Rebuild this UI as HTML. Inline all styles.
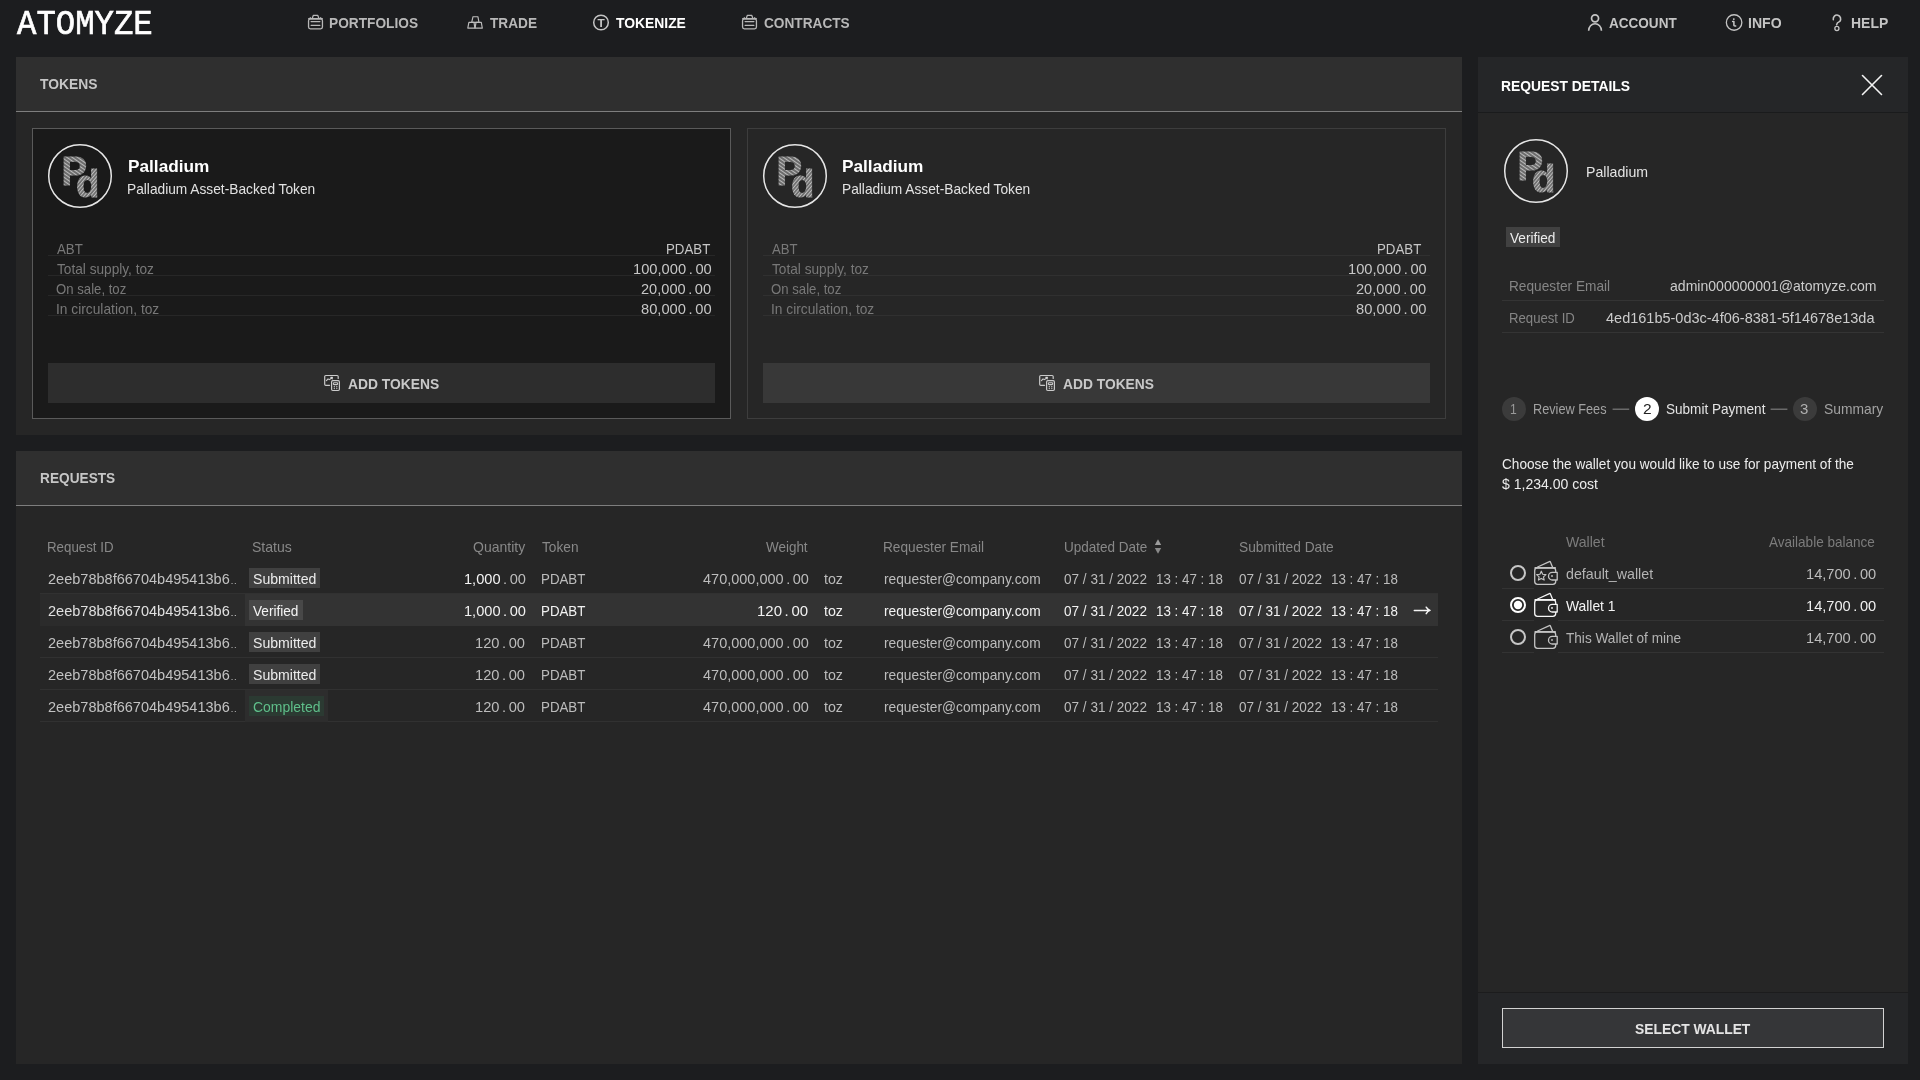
<!DOCTYPE html>
<html lang="en"><head><meta charset="utf-8"><title>Atomyze - Tokenize</title>
<style>
html,body{margin:0;padding:0;background:#1c1d1f;}
body{width:1920px;height:1080px;overflow:hidden;font-family:"Liberation Sans",sans-serif;}
#app{position:relative;width:1920px;height:1080px;overflow:hidden;background:#1c1d1f;}
.b{position:absolute;box-sizing:border-box;}
.t{position:absolute;line-height:0;white-space:pre;transform-origin:0 50%;font-family:"Liberation Sans",sans-serif;}
.t i{font-style:normal;margin:0 2.6px;}
.t b{font-weight:400;}
.t u{text-decoration:none;font-size:9.5px;letter-spacing:0.6px;margin-left:1px;}
svg{position:absolute;overflow:visible;will-change:transform;}
#txt{position:absolute;left:0;top:0;width:1920px;height:1080px;will-change:transform;}

</style></head>
<body>
<div id="app">
<div class="b " style="left:16px;top:57px;width:1446px;height:378px;background:#262626;"></div>
<div class="b " style="left:16px;top:57px;width:1446px;height:54px;background:#2f2f2f;"></div>
<div class="b " style="left:16px;top:111px;width:1446px;height:1px;background:#7e7e7e;"></div>
<div class="b " style="left:32px;top:128px;width:699px;height:291px;background:#1a1a1a;border:1px solid #5a5a5a;"></div>
<div class="b " style="left:747px;top:128px;width:699px;height:291px;background:#262626;border:1px solid #3d3d3d;"></div>
<div class="b " style="left:48px;top:255px;width:667px;height:1px;background:#272727;"></div>
<div class="b " style="left:48px;top:275px;width:667px;height:1px;background:#272727;"></div>
<div class="b " style="left:48px;top:295px;width:667px;height:1px;background:#272727;"></div>
<div class="b " style="left:48px;top:315px;width:667px;height:1px;background:#272727;"></div>
<div class="b " style="left:48px;top:363px;width:667px;height:40px;background:#2d2d2d;"></div>
<div class="b " style="left:763px;top:255px;width:667px;height:1px;background:#303030;"></div>
<div class="b " style="left:763px;top:275px;width:667px;height:1px;background:#303030;"></div>
<div class="b " style="left:763px;top:295px;width:667px;height:1px;background:#303030;"></div>
<div class="b " style="left:763px;top:315px;width:667px;height:1px;background:#303030;"></div>
<div class="b " style="left:763px;top:363px;width:667px;height:40px;background:#383838;"></div>
<div class="b " style="left:16px;top:451px;width:1446px;height:613px;background:#262626;"></div>
<div class="b " style="left:16px;top:451px;width:1446px;height:54px;background:#2f2f2f;"></div>
<div class="b " style="left:16px;top:505px;width:1446px;height:1px;background:#7e7e7e;"></div>
<div class="b " style="left:40px;top:593px;width:1398px;height:1px;background:#313131;"></div>
<div class="b " style="left:40px;top:625px;width:1398px;height:1px;background:#313131;"></div>
<div class="b " style="left:40px;top:657px;width:1398px;height:1px;background:#313131;"></div>
<div class="b " style="left:40px;top:689px;width:1398px;height:1px;background:#313131;"></div>
<div class="b " style="left:40px;top:721px;width:1398px;height:1px;background:#313131;"></div>
<div class="b " style="left:40px;top:594px;width:205px;height:32px;background:#2b2b2b;"></div>
<div class="b " style="left:245px;top:594px;width:1193px;height:32px;background:#333333;"></div>
<div class="b " style="left:245px;top:690px;width:83px;height:32px;background:#2d2d2d;"></div>
<div class="b " style="left:249px;top:568px;width:71px;height:20px;background:#404040;"></div>
<div class="b " style="left:249px;top:632px;width:71px;height:20px;background:#404040;"></div>
<div class="b " style="left:249px;top:664px;width:71px;height:20px;background:#404040;"></div>
<div class="b " style="left:249px;top:600px;width:54px;height:20px;background:#484848;"></div>
<div class="b " style="left:249px;top:696px;width:75px;height:20px;background:#2b3a32;"></div>
<div class="b " style="left:1478px;top:57px;width:430px;height:1007px;background:#262626;"></div>
<div class="b " style="left:1478px;top:57px;width:430px;height:55px;background:#252628;"></div>
<div class="b " style="left:1478px;top:112px;width:430px;height:1px;background:#1a1b1c;"></div>
<div class="b " style="left:1478px;top:993px;width:430px;height:71px;background:#252628;"></div>
<div class="b " style="left:1478px;top:992px;width:430px;height:1px;background:#1c1c1d;"></div>
<div class="b " style="left:1506px;top:227px;width:54px;height:20px;background:#414141;"></div>
<div class="b " style="left:1502px;top:300px;width:382px;height:1px;background:#343434;"></div>
<div class="b " style="left:1502px;top:332px;width:382px;height:1px;background:#343434;"></div>
<div class="b " style="left:1502px;top:397px;width:24px;height:24px;background:#3b3b3b;border-radius:50%;"></div>
<div class="b " style="left:1634.5px;top:397px;width:24px;height:24px;background:#ffffff;border-radius:50%;"></div>
<div class="b " style="left:1793px;top:397px;width:24px;height:24px;background:#3b3b3b;border-radius:50%;"></div>
<div class="b " style="left:1502px;top:588px;width:32px;height:1px;background:#333333;"></div>
<div class="b " style="left:1558px;top:588px;width:326px;height:1px;background:#333333;"></div>
<div class="b " style="left:1502px;top:620px;width:32px;height:1px;background:#333333;"></div>
<div class="b " style="left:1558px;top:620px;width:326px;height:1px;background:#333333;"></div>
<div class="b " style="left:1502px;top:652px;width:32px;height:1px;background:#333333;"></div>
<div class="b " style="left:1558px;top:652px;width:326px;height:1px;background:#333333;"></div>
<div class="b " style="left:1502px;top:1008px;width:382px;height:40px;background:#353638;border:1px solid #d2d2d2;"></div>
<svg width="1920" height="1080" viewBox="0 0 1920 1080" style="left:0;top:0"><defs><pattern id="hx" width="3" height="3" patternUnits="userSpaceOnUse" patternTransform="rotate(35)"><rect width="3" height="3" fill="#6c6c6c"/><rect width="3" height="1.0" fill="#bcbcbc"/></pattern><pattern id="hy" width="2.6" height="2.6" patternUnits="userSpaceOnUse" patternTransform="rotate(-50)"><rect width="2.6" height="2.6" fill="#707070"/><rect width="2.6" height="0.9" fill="#c0c0c0"/></pattern></defs><g stroke="#b8b8b8" stroke-width="1.3" fill="none" stroke-linecap="round" stroke-linejoin="round" ><rect x="308.54999999999995" y="18.9" width="13.9" height="9.9" rx="1.8"/><path d="M308.79999999999995 18.8 H322.2" stroke-width="1.5"/><path d="M312.29999999999995 18.3 L313.29999999999995 15.4 H317.79999999999995 L318.79999999999995 18.3"/><path d="M311.09999999999997 21.6 H319.9 M311.09999999999997 25.3 H319.9"/><path d="M309.79999999999995 18.2 l0.6 -0.9 M321.2 18.2 l-0.6 -0.9" stroke-width="1"/></g><g stroke="#b8b8b8" stroke-width="1.3" fill="none" stroke-linecap="round" stroke-linejoin="round" ><rect x="742.55" y="18.9" width="13.9" height="9.9" rx="1.8"/><path d="M742.8 18.8 H756.1999999999999" stroke-width="1.5"/><path d="M746.3 18.3 L747.3 15.4 H751.8 L752.8 18.3"/><path d="M745.1 21.6 H753.9 M745.1 25.3 H753.9"/><path d="M743.8 18.2 l0.6 -0.9 M755.1999999999999 18.2 l-0.6 -0.9" stroke-width="1"/></g><g stroke="#bcbcbc" stroke-width="1.15" fill="none" stroke-linecap="round" stroke-linejoin="round" ><path d="M473.0 16.7 H477.9 L479.0 22.3 H471.7 Z"/><path d="M468.9 22.3 H474.0 L474.9 28.1 H467.8 Z"/><path d="M476.0 22.3 H481.3 L482.3 28.1 H475.1 Z"/></g><g stroke="#c4c4c4" stroke-width="1.3" fill="none" stroke-linecap="round" stroke-linejoin="round" ><circle cx="601" cy="22.5" r="7.3" stroke-width="1.5"/></g><text x="601" y="27.2" text-anchor="middle" font-family="'Liberation Sans',sans-serif" font-weight="700" font-size="11.8" fill="#c8c8c8">T</text><g stroke="#c4c4c4" stroke-width="1.6" fill="none" stroke-linecap="round" stroke-linejoin="round" ><circle cx="1595.05" cy="18.35" r="3.5" stroke-width="1.75"/><path d="M1588.65 30.7 A6.4 7.0 0 0 1 1601.45 30.7" stroke-linecap="butt"/></g><g stroke="#c4c4c4" stroke-width="1.3" fill="none" stroke-linecap="round" stroke-linejoin="round" ><circle cx="1734.1" cy="22.5" r="7.75"/></g><g stroke="#c8c8c8" stroke-width="1.3" fill="none" stroke-linecap="round" stroke-linejoin="round" ><circle cx="1733.8" cy="19.1" r="0.95" fill="#c8c8c8" stroke="none"/><path d="M1732.6 21.6 H1733.9 V25.3 Q1734 25.9 1735.7 25.9" stroke-width="1.5"/></g><g stroke="#c4c4c4" stroke-width="1.3" fill="none" stroke-linecap="round" stroke-linejoin="round" ><path d="M1833.3 19.6 A3.7 3.9 0 1 1 1839.8 21.4 Q1836.7 22.9 1836.6 24.7" stroke-width="1.6"/><circle cx="1836.9" cy="28.5" r="2.05" stroke-width="1.3"/></g><g stroke="#6a6a6a" stroke-width="1.5" fill="none" stroke-linecap="round" stroke-linejoin="round" ><path d="M1612.6 409.3 H1629.2 M1770.6 409.3 H1787.4" stroke-linecap="butt"/></g><g stroke="#f4f4f4" stroke-width="1.6" fill="none" stroke-linecap="round" stroke-linejoin="round" ><path d="M1862.5 75.5 L1881.5 94.5 M1881.5 75.5 L1862.5 94.5"/></g><g stroke="#cacaca" stroke-width="1.2" fill="none" stroke-linecap="round" stroke-linejoin="round" ><path d="M329.6 385.3 H325.8 Q324.7 385.3 324.7 384.2 V376.6 Q324.7 375.5 325.8 375.5 H337.1 Q338.2 375.5 338.2 376.6 V378.4"/><path d="M326.4 380.6 L328.0 379.0 L329.6 379.6 L331.6 377.9" stroke-width="1.1"/><path d="M330.8 377.2 L332.6 377.1 L332.3 378.9 Z" fill="#e8e8e8" stroke="#e8e8e8" stroke-width="0.6"/><rect x="331.6" y="380.7" width="7.8" height="9.8" rx="1.2"/><rect x="333.4" y="382.7" width="4.2" height="1.9" rx="0.6" stroke-width="1.1"/><path d="M334.3 386.7 h0.01 M336.8 386.7 h0.01 M334.3 388.6 h0.01 M336.8 388.6 h0.01" stroke-width="1.4"/></g><g stroke="#cacaca" stroke-width="1.2" fill="none" stroke-linecap="round" stroke-linejoin="round" ><path d="M1044.6 385.3 H1040.8 Q1039.7 385.3 1039.7 384.2 V376.6 Q1039.7 375.5 1040.8 375.5 H1052.1 Q1053.2 375.5 1053.2 376.6 V378.4"/><path d="M1041.4 380.6 L1043.0 379.0 L1044.6 379.6 L1046.6 377.9" stroke-width="1.1"/><path d="M1045.8 377.2 L1047.6 377.1 L1047.3 378.9 Z" fill="#e8e8e8" stroke="#e8e8e8" stroke-width="0.6"/><rect x="1046.6" y="380.7" width="7.8" height="9.8" rx="1.2"/><rect x="1048.4" y="382.7" width="4.2" height="1.9" rx="0.6" stroke-width="1.1"/><path d="M1049.3 386.7 h0.01 M1051.8 386.7 h0.01 M1049.3 388.6 h0.01 M1051.8 388.6 h0.01" stroke-width="1.4"/></g><path d="M1158 539.2 L1161.2 545 H1154.8 Z" fill="#9c9c9c"/><path d="M1154.8 548 H1161.2 L1158 553.8 Z" fill="#8a8a8a"/><g stroke="#f4f4f4" stroke-width="1.5" fill="none" stroke-linecap="round" stroke-linejoin="round" ><path d="M1414.3 610.4 H1429.8 M1426.2 607.2 Q1427.6 609.6 1430 610.4 Q1427.6 611.2 1426.2 613.6"/></g><g stroke="#c6c6c6" stroke-width="2" fill="none" stroke-linecap="round" stroke-linejoin="round" ><circle cx="1518" cy="573" r="7"/></g><g stroke="#ffffff" stroke-width="2" fill="none" stroke-linecap="round" stroke-linejoin="round" ><circle cx="1518" cy="605" r="7"/><circle cx="1518" cy="605" r="4.2" fill="#ffffff" stroke="none"/></g><g stroke="#c6c6c6" stroke-width="2" fill="none" stroke-linecap="round" stroke-linejoin="round" ><circle cx="1518" cy="637" r="7"/></g><g stroke="#c4c4c4" stroke-width="1.3" fill="none" stroke-linecap="round" stroke-linejoin="round" ><rect x="1534.7" y="567.9" width="21" height="16.5" rx="2.8"/><path d="M1535.2 567.9 H1555.2" stroke-width="1.7"/><path d="M1537.6 567.0 L1549.4 561.6 Q1550.1 561.3 1550.4 562.0 L1552.6 567.2"/><path d="M1557.2 572.4 H1552.3 A3.8 3.8 0 0 0 1552.3 580.0 H1557.2 Z" fill="#262626"/><circle cx="1552" cy="576.0" r="0.9" fill="#c4c4c4" stroke="none"/><polygon points="1541.30,571.20 1542.65,574.24 1545.96,574.59 1543.49,576.81 1544.18,580.06 1541.30,578.40 1538.42,580.06 1539.11,576.81 1536.64,574.59 1539.95,574.24" stroke-width="1.15"/></g><g stroke="#f6f6f6" stroke-width="1.3" fill="none" stroke-linecap="round" stroke-linejoin="round" ><rect x="1534.7" y="599.9" width="21" height="16.5" rx="2.8"/><path d="M1535.2 599.9 H1555.2" stroke-width="1.7"/><path d="M1537.6 599.0 L1549.4 593.6 Q1550.1 593.3 1550.4 594.0 L1552.6 599.2"/><path d="M1557.2 604.4 H1552.3 A3.8 3.8 0 0 0 1552.3 612.0 H1557.2 Z" fill="#262626"/><circle cx="1552" cy="608.0" r="0.9" fill="#f6f6f6" stroke="none"/></g><g stroke="#c4c4c4" stroke-width="1.3" fill="none" stroke-linecap="round" stroke-linejoin="round" ><rect x="1534.7" y="631.9" width="21" height="16.5" rx="2.8"/><path d="M1535.2 631.9 H1555.2" stroke-width="1.7"/><path d="M1537.6 631.0 L1549.4 625.6 Q1550.1 625.3 1550.4 626.0 L1552.6 631.2"/><path d="M1557.2 636.4 H1552.3 A3.8 3.8 0 0 0 1552.3 644.0 H1557.2 Z" fill="#262626"/><circle cx="1552" cy="640.0" r="0.9" fill="#c4c4c4" stroke="none"/></g><circle cx="80" cy="176" r="31.3" fill="none" stroke="#e6e6e6" stroke-width="1.5"/><text x="61.4" y="185.1" font-family="'Liberation Sans',sans-serif" font-weight="700" font-size="40.5" fill="url(#hx)" stroke="url(#hx)" stroke-width="0.9" textLength="25.6" lengthAdjust="spacingAndGlyphs">P</text><text x="75.9" y="196.9" font-family="'Liberation Sans',sans-serif" font-weight="700" font-size="38.5" fill="#1a1a1a" stroke="#1a1a1a" stroke-width="3" textLength="23.4" lengthAdjust="spacingAndGlyphs">d</text><text x="75.9" y="196.9" font-family="'Liberation Sans',sans-serif" font-weight="700" font-size="38.5" fill="url(#hy)" stroke="url(#hy)" stroke-width="0.8" textLength="23.4" lengthAdjust="spacingAndGlyphs">d</text><circle cx="795" cy="176" r="31.3" fill="none" stroke="#e6e6e6" stroke-width="1.5"/><text x="776.4" y="185.1" font-family="'Liberation Sans',sans-serif" font-weight="700" font-size="40.5" fill="url(#hx)" stroke="url(#hx)" stroke-width="0.9" textLength="25.6" lengthAdjust="spacingAndGlyphs">P</text><text x="790.9" y="196.9" font-family="'Liberation Sans',sans-serif" font-weight="700" font-size="38.5" fill="#262626" stroke="#262626" stroke-width="3" textLength="23.4" lengthAdjust="spacingAndGlyphs">d</text><text x="790.9" y="196.9" font-family="'Liberation Sans',sans-serif" font-weight="700" font-size="38.5" fill="url(#hy)" stroke="url(#hy)" stroke-width="0.8" textLength="23.4" lengthAdjust="spacingAndGlyphs">d</text><circle cx="1536" cy="171" r="31.3" fill="none" stroke="#e6e6e6" stroke-width="1.5"/><text x="1517.4" y="180.1" font-family="'Liberation Sans',sans-serif" font-weight="700" font-size="40.5" fill="url(#hx)" stroke="url(#hx)" stroke-width="0.9" textLength="25.6" lengthAdjust="spacingAndGlyphs">P</text><text x="1531.9" y="191.9" font-family="'Liberation Sans',sans-serif" font-weight="700" font-size="38.5" fill="#262626" stroke="#262626" stroke-width="3" textLength="23.4" lengthAdjust="spacingAndGlyphs">d</text><text x="1531.9" y="191.9" font-family="'Liberation Sans',sans-serif" font-weight="700" font-size="38.5" fill="url(#hy)" stroke="url(#hy)" stroke-width="0.8" textLength="23.4" lengthAdjust="spacingAndGlyphs">d</text></svg>
<div id="txt">
<span class="t" style="top:24.71px;font-size:35.2px;color:#ffffff;-webkit-text-stroke:0.7px #ffffff;font-family:'Liberation Mono', monospace;left:16.91px;transform:scaleX(0.9180);">ATOMYZE</span>
<span class="t" style="top:22.96px;font-size:15.4px;color:#b8b8b8;font-weight:700;left:329.29px;transform:scaleX(0.8900);">PORTFOLIOS</span>
<span class="t" style="top:22.96px;font-size:15.4px;color:#b8b8b8;font-weight:700;left:489.64px;transform:scaleX(0.8866);">TRADE</span>
<span class="t" style="top:22.96px;font-size:15.4px;color:#ffffff;font-weight:700;left:615.50px;transform:scaleX(0.9009);">TOKENIZE</span>
<span class="t" style="top:22.96px;font-size:15.4px;color:#b8b8b8;font-weight:700;left:763.64px;transform:scaleX(0.8874);">CONTRACTS</span>
<span class="t" style="top:22.96px;font-size:15.4px;color:#c4c4c4;font-weight:700;left:1609.13px;transform:scaleX(0.8795);">ACCOUNT</span>
<span class="t" style="top:22.96px;font-size:15.4px;color:#c4c4c4;font-weight:700;left:1747.71px;transform:scaleX(0.9133);">INFO</span>
<span class="t" style="top:22.96px;font-size:15.4px;color:#c4c4c4;font-weight:700;left:1850.50px;transform:scaleX(0.9063);">HELP</span>
<span class="t" style="top:83.70px;font-size:15.3px;color:#c6c6c6;font-weight:700;left:40.40px;transform:scaleX(0.9039);">TOKENS</span>
<span class="t" style="top:477.70px;font-size:15.3px;color:#c6c6c6;font-weight:700;left:39.58px;transform:scaleX(0.8940);">REQUESTS</span>
<span class="t" style="top:166.71px;font-size:17px;color:#ffffff;font-weight:700;left:127.50px;transform:scaleX(1.0131);">Palladium</span>
<span class="t" style="top:189.12px;font-size:14.8px;color:#e2e2e2;left:127.26px;transform:scaleX(0.9279);">Palladium Asset-Backed Token</span>
<span class="t" style="top:249.12px;font-size:14.8px;color:#787878;left:56.61px;transform:scaleX(0.8947);">ABT</span>
<span class="t" style="top:269.12px;font-size:14.8px;color:#787878;left:56.64px;transform:scaleX(0.9230);">Total supply, toz</span>
<span class="t" style="top:289.12px;font-size:14.8px;color:#787878;left:55.58px;transform:scaleX(0.8900);">On sale, toz</span>
<span class="t" style="top:309.12px;font-size:14.8px;color:#787878;left:55.58px;transform:scaleX(0.9299);">In circulation, toz</span>
<span class="t" style="top:249.12px;font-size:14.8px;color:#c6c6c6;left:666.44px;transform:scaleX(0.8971);">PDABT</span>
<span class="t" style="top:269.12px;font-size:14.8px;color:#c6c6c6;left:632.60px;transform:scaleX(0.9933);">100,000<i>.</i>00</span>
<span class="t" style="top:289.12px;font-size:14.8px;color:#c6c6c6;left:641.25px;transform:scaleX(0.9870);">20,000<i>.</i>00</span>
<span class="t" style="top:309.12px;font-size:14.8px;color:#c6c6c6;left:640.71px;transform:scaleX(0.9934);">80,000<i>.</i>00</span>
<span class="t" style="top:383.80px;font-size:15px;color:#c8c8c8;font-weight:700;left:348.35px;transform:scaleX(0.9216);">ADD TOKENS</span>
<span class="t" style="top:166.71px;font-size:17px;color:#ffffff;font-weight:700;left:842.49px;transform:scaleX(1.0135);">Palladium</span>
<span class="t" style="top:189.12px;font-size:14.8px;color:#e2e2e2;left:842.30px;transform:scaleX(0.9277);">Palladium Asset-Backed Token</span>
<span class="t" style="top:249.12px;font-size:14.8px;color:#787878;left:771.60px;transform:scaleX(0.8880);">ABT</span>
<span class="t" style="top:269.12px;font-size:14.8px;color:#787878;left:771.56px;transform:scaleX(0.9230);">Total supply, toz</span>
<span class="t" style="top:289.12px;font-size:14.8px;color:#787878;left:770.61px;transform:scaleX(0.8901);">On sale, toz</span>
<span class="t" style="top:309.12px;font-size:14.8px;color:#787878;left:770.54px;transform:scaleX(0.9299);">In circulation, toz</span>
<span class="t" style="top:249.12px;font-size:14.8px;color:#c6c6c6;left:1377.42px;transform:scaleX(0.8976);">PDABT</span>
<span class="t" style="top:269.12px;font-size:14.8px;color:#c6c6c6;left:1347.60px;transform:scaleX(0.9936);">100,000<i>.</i>00</span>
<span class="t" style="top:289.12px;font-size:14.8px;color:#c6c6c6;left:1356.22px;transform:scaleX(0.9853);">20,000<i>.</i>00</span>
<span class="t" style="top:309.12px;font-size:14.8px;color:#c6c6c6;left:1355.71px;transform:scaleX(0.9929);">80,000<i>.</i>00</span>
<span class="t" style="top:383.80px;font-size:15px;color:#c8c8c8;font-weight:700;left:1063.33px;transform:scaleX(0.9200);">ADD TOKENS</span>
<span class="t" style="top:546.87px;font-size:14.8px;color:#888888;left:47.48px;transform:scaleX(0.8981);">Request ID</span>
<span class="t" style="top:546.87px;font-size:14.8px;color:#888888;left:252.48px;transform:scaleX(0.9499);">Status</span>
<span class="t" style="top:546.87px;font-size:14.8px;color:#888888;left:473.41px;transform:scaleX(0.9462);">Quantity</span>
<span class="t" style="top:546.87px;font-size:14.8px;color:#888888;left:541.84px;transform:scaleX(0.9246);">Token</span>
<span class="t" style="top:546.87px;font-size:14.8px;color:#888888;left:766.24px;transform:scaleX(0.9088);">Weight</span>
<span class="t" style="top:546.87px;font-size:14.8px;color:#888888;left:883.25px;transform:scaleX(0.9238);">Requester Email</span>
<span class="t" style="top:546.87px;font-size:14.8px;color:#888888;left:1063.71px;transform:scaleX(0.9128);">Updated Date</span>
<span class="t" style="top:546.87px;font-size:14.8px;color:#888888;left:1238.55px;transform:scaleX(0.9279);">Submitted Date</span>
<span class="t" style="top:579.37px;font-size:14.8px;color:#c2c2c2;left:48.29px;transform:scaleX(0.9817);">2eeb78b8f66704b495413b6<u>..</u></span>
<span class="t" style="top:579.37px;font-size:14.8px;color:#ececec;left:252.69px;transform:scaleX(0.9522);">Submitted</span>
<span class="t" style="top:579.37px;font-size:14.8px;color:#bcbcbc;left:463.58px;transform:scaleX(0.9869);"><b style="color:#f4f4f4">1,000</b><i>.</i>00</span>
<span class="t" style="top:579.37px;font-size:14.8px;color:#bcbcbc;left:540.76px;transform:scaleX(0.8996);">PDABT</span>
<span class="t" style="top:579.37px;font-size:14.8px;color:#bcbcbc;left:702.59px;transform:scaleX(0.9798);">470,000,000<i>.</i>00</span>
<span class="t" style="top:579.37px;font-size:14.8px;color:#bcbcbc;left:824.19px;transform:scaleX(0.9621);">toz</span>
<span class="t" style="top:579.37px;font-size:14.8px;color:#bcbcbc;left:883.59px;transform:scaleX(0.9293);">requester@company.com</span>
<span class="t" style="top:579.37px;font-size:14.8px;color:#bcbcbc;left:1063.71px;transform:scaleX(0.9162);">07 / 31 / 2022</span>
<span class="t" style="top:579.37px;font-size:14.8px;color:#bcbcbc;left:1155.72px;transform:scaleX(0.9026);">13 : 47 : 18</span>
<span class="t" style="top:579.37px;font-size:14.8px;color:#bcbcbc;left:1238.71px;transform:scaleX(0.9162);">07 / 31 / 2022</span>
<span class="t" style="top:579.37px;font-size:14.8px;color:#bcbcbc;left:1330.72px;transform:scaleX(0.9026);">13 : 47 : 18</span>
<span class="t" style="top:611.37px;font-size:14.8px;color:#e0e0e0;left:48.29px;transform:scaleX(0.9817);">2eeb78b8f66704b495413b6<u>..</u></span>
<span class="t" style="top:611.37px;font-size:14.8px;color:#f4f4f4;left:253.48px;transform:scaleX(0.9209);">Verified</span>
<span class="t" style="top:611.37px;font-size:14.8px;color:#f2f2f2;left:463.58px;transform:scaleX(0.9869);">1,000<i>.</i>00</span>
<span class="t" style="top:611.37px;font-size:14.8px;color:#f2f2f2;left:540.76px;transform:scaleX(0.8996);">PDABT</span>
<span class="t" style="top:611.37px;font-size:14.8px;color:#f2f2f2;left:757.12px;transform:scaleX(1.0106);">120<i>.</i>00</span>
<span class="t" style="top:611.37px;font-size:14.8px;color:#f2f2f2;left:824.19px;transform:scaleX(0.9621);">toz</span>
<span class="t" style="top:611.37px;font-size:14.8px;color:#f2f2f2;left:883.59px;transform:scaleX(0.9293);">requester@company.com</span>
<span class="t" style="top:611.37px;font-size:14.8px;color:#f2f2f2;left:1063.71px;transform:scaleX(0.9162);">07 / 31 / 2022</span>
<span class="t" style="top:611.37px;font-size:14.8px;color:#f2f2f2;left:1155.72px;transform:scaleX(0.9026);">13 : 47 : 18</span>
<span class="t" style="top:611.37px;font-size:14.8px;color:#f2f2f2;left:1238.71px;transform:scaleX(0.9162);">07 / 31 / 2022</span>
<span class="t" style="top:611.37px;font-size:14.8px;color:#f2f2f2;left:1330.72px;transform:scaleX(0.9026);">13 : 47 : 18</span>
<span class="t" style="top:643.37px;font-size:14.8px;color:#c2c2c2;left:48.29px;transform:scaleX(0.9817);">2eeb78b8f66704b495413b6<u>..</u></span>
<span class="t" style="top:643.37px;font-size:14.8px;color:#ececec;left:252.69px;transform:scaleX(0.9522);">Submitted</span>
<span class="t" style="top:643.37px;font-size:14.8px;color:#bcbcbc;left:475.24px;transform:scaleX(0.9912);">120<i>.</i>00</span>
<span class="t" style="top:643.37px;font-size:14.8px;color:#bcbcbc;left:540.76px;transform:scaleX(0.8996);">PDABT</span>
<span class="t" style="top:643.37px;font-size:14.8px;color:#bcbcbc;left:702.59px;transform:scaleX(0.9798);">470,000,000<i>.</i>00</span>
<span class="t" style="top:643.37px;font-size:14.8px;color:#bcbcbc;left:824.19px;transform:scaleX(0.9621);">toz</span>
<span class="t" style="top:643.37px;font-size:14.8px;color:#bcbcbc;left:883.59px;transform:scaleX(0.9293);">requester@company.com</span>
<span class="t" style="top:643.37px;font-size:14.8px;color:#bcbcbc;left:1063.71px;transform:scaleX(0.9162);">07 / 31 / 2022</span>
<span class="t" style="top:643.37px;font-size:14.8px;color:#bcbcbc;left:1155.72px;transform:scaleX(0.9026);">13 : 47 : 18</span>
<span class="t" style="top:643.37px;font-size:14.8px;color:#bcbcbc;left:1238.71px;transform:scaleX(0.9162);">07 / 31 / 2022</span>
<span class="t" style="top:643.37px;font-size:14.8px;color:#bcbcbc;left:1330.72px;transform:scaleX(0.9026);">13 : 47 : 18</span>
<span class="t" style="top:675.37px;font-size:14.8px;color:#c2c2c2;left:48.29px;transform:scaleX(0.9817);">2eeb78b8f66704b495413b6<u>..</u></span>
<span class="t" style="top:675.37px;font-size:14.8px;color:#ececec;left:252.69px;transform:scaleX(0.9522);">Submitted</span>
<span class="t" style="top:675.37px;font-size:14.8px;color:#bcbcbc;left:475.24px;transform:scaleX(0.9912);">120<i>.</i>00</span>
<span class="t" style="top:675.37px;font-size:14.8px;color:#bcbcbc;left:540.76px;transform:scaleX(0.8996);">PDABT</span>
<span class="t" style="top:675.37px;font-size:14.8px;color:#bcbcbc;left:702.59px;transform:scaleX(0.9798);">470,000,000<i>.</i>00</span>
<span class="t" style="top:675.37px;font-size:14.8px;color:#bcbcbc;left:824.19px;transform:scaleX(0.9621);">toz</span>
<span class="t" style="top:675.37px;font-size:14.8px;color:#bcbcbc;left:883.59px;transform:scaleX(0.9293);">requester@company.com</span>
<span class="t" style="top:675.37px;font-size:14.8px;color:#bcbcbc;left:1063.71px;transform:scaleX(0.9162);">07 / 31 / 2022</span>
<span class="t" style="top:675.37px;font-size:14.8px;color:#bcbcbc;left:1155.72px;transform:scaleX(0.9026);">13 : 47 : 18</span>
<span class="t" style="top:675.37px;font-size:14.8px;color:#bcbcbc;left:1238.71px;transform:scaleX(0.9162);">07 / 31 / 2022</span>
<span class="t" style="top:675.37px;font-size:14.8px;color:#bcbcbc;left:1330.72px;transform:scaleX(0.9026);">13 : 47 : 18</span>
<span class="t" style="top:707.37px;font-size:14.8px;color:#c2c2c2;left:48.29px;transform:scaleX(0.9817);">2eeb78b8f66704b495413b6<u>..</u></span>
<span class="t" style="top:707.37px;font-size:14.8px;color:#5fbf8a;left:252.89px;transform:scaleX(0.9434);">Completed</span>
<span class="t" style="top:707.37px;font-size:14.8px;color:#bcbcbc;left:475.24px;transform:scaleX(0.9912);">120<i>.</i>00</span>
<span class="t" style="top:707.37px;font-size:14.8px;color:#bcbcbc;left:540.76px;transform:scaleX(0.8996);">PDABT</span>
<span class="t" style="top:707.37px;font-size:14.8px;color:#bcbcbc;left:702.59px;transform:scaleX(0.9798);">470,000,000<i>.</i>00</span>
<span class="t" style="top:707.37px;font-size:14.8px;color:#bcbcbc;left:824.19px;transform:scaleX(0.9621);">toz</span>
<span class="t" style="top:707.37px;font-size:14.8px;color:#bcbcbc;left:883.59px;transform:scaleX(0.9293);">requester@company.com</span>
<span class="t" style="top:707.37px;font-size:14.8px;color:#bcbcbc;left:1063.71px;transform:scaleX(0.9162);">07 / 31 / 2022</span>
<span class="t" style="top:707.37px;font-size:14.8px;color:#bcbcbc;left:1155.72px;transform:scaleX(0.9026);">13 : 47 : 18</span>
<span class="t" style="top:707.37px;font-size:14.8px;color:#bcbcbc;left:1238.71px;transform:scaleX(0.9162);">07 / 31 / 2022</span>
<span class="t" style="top:707.37px;font-size:14.8px;color:#bcbcbc;left:1330.72px;transform:scaleX(0.9026);">13 : 47 : 18</span>
<span class="t" style="top:86.05px;font-size:15px;color:#ffffff;font-weight:700;left:1501.30px;transform:scaleX(0.9234);">REQUEST DETAILS</span>
<span class="t" style="top:171.87px;font-size:14.8px;color:#e4e4e4;left:1585.69px;transform:scaleX(0.9555);">Palladium</span>
<span class="t" style="top:237.87px;font-size:14.8px;color:#ececec;left:1510.21px;transform:scaleX(0.9206);">Verified</span>
<span class="t" style="top:286.12px;font-size:14.8px;color:#858585;left:1509.46px;transform:scaleX(0.9241);">Requester Email</span>
<span class="t" style="top:286.12px;font-size:14.8px;color:#cccccc;left:1669.62px;transform:scaleX(0.9499);">admin000000001@atomyze.com</span>
<span class="t" style="top:317.87px;font-size:14.8px;color:#858585;left:1509.32px;transform:scaleX(0.8891);">Request ID</span>
<span class="t" style="top:317.87px;font-size:14.8px;color:#cccccc;left:1606.41px;transform:scaleX(0.9800);">4ed161b5-0d3c-4f06-8381-5f14678e13da</span>
<span class="t" style="top:409.13px;font-size:15.5px;color:#9a9a9a;left:1509.60px;transform:scaleX(0.7852);">1</span>
<span class="t" style="top:409.13px;font-size:15.5px;color:#222222;left:1642.50px;transform:scaleX(0.9994);">2</span>
<span class="t" style="top:409.13px;font-size:15.5px;color:#b0b0b0;left:1800.32px;transform:scaleX(0.9682);">3</span>
<span class="t" style="top:409.12px;font-size:14.8px;color:#a2a2a2;left:1533.44px;transform:scaleX(0.8593);">Review Fees</span>
<span class="t" style="top:409.12px;font-size:14.8px;color:#e4e4e4;left:1665.86px;transform:scaleX(0.9158);">Submit Payment</span>
<span class="t" style="top:409.12px;font-size:14.8px;color:#a2a2a2;left:1823.98px;transform:scaleX(0.9352);">Summary</span>
<span class="t" style="top:464.37px;font-size:14.8px;color:#ececec;left:1501.84px;transform:scaleX(0.9201);">Choose the wallet you would like to use for payment of the</span>
<span class="t" style="top:484.12px;font-size:14.8px;color:#ececec;left:1502.24px;transform:scaleX(0.9488);">$ 1,234.00 cost</span>
<span class="t" style="top:542.12px;font-size:14.8px;color:#7c7c7c;left:1566.10px;transform:scaleX(0.9517);">Wallet</span>
<span class="t" style="top:542.12px;font-size:14.8px;color:#7c7c7c;left:1769.28px;transform:scaleX(0.9148);">Available balance</span>
<span class="t" style="top:573.87px;font-size:14.8px;color:#b4b4b4;left:1565.74px;transform:scaleX(0.9625);">default_wallet</span>
<span class="t" style="top:573.87px;font-size:14.8px;color:#bcbcbc;left:1805.52px;transform:scaleX(0.9888);">14,700<i>.</i>00</span>
<span class="t" style="top:605.87px;font-size:14.8px;color:#f4f4f4;left:1566.38px;transform:scaleX(0.9353);">Wallet 1</span>
<span class="t" style="top:605.87px;font-size:14.8px;color:#f0f0f0;left:1805.52px;transform:scaleX(0.9888);">14,700<i>.</i>00</span>
<span class="t" style="top:637.87px;font-size:14.8px;color:#b4b4b4;left:1566.45px;transform:scaleX(0.9193);">This Wallet of mine</span>
<span class="t" style="top:637.87px;font-size:14.8px;color:#bcbcbc;left:1805.52px;transform:scaleX(0.9888);">14,700<i>.</i>00</span>
<span class="t" style="top:1029.05px;font-size:15px;color:#e4e4e4;font-weight:700;left:1634.66px;transform:scaleX(0.9226);">SELECT WALLET</span>
</div>
</div>
</body></html>
